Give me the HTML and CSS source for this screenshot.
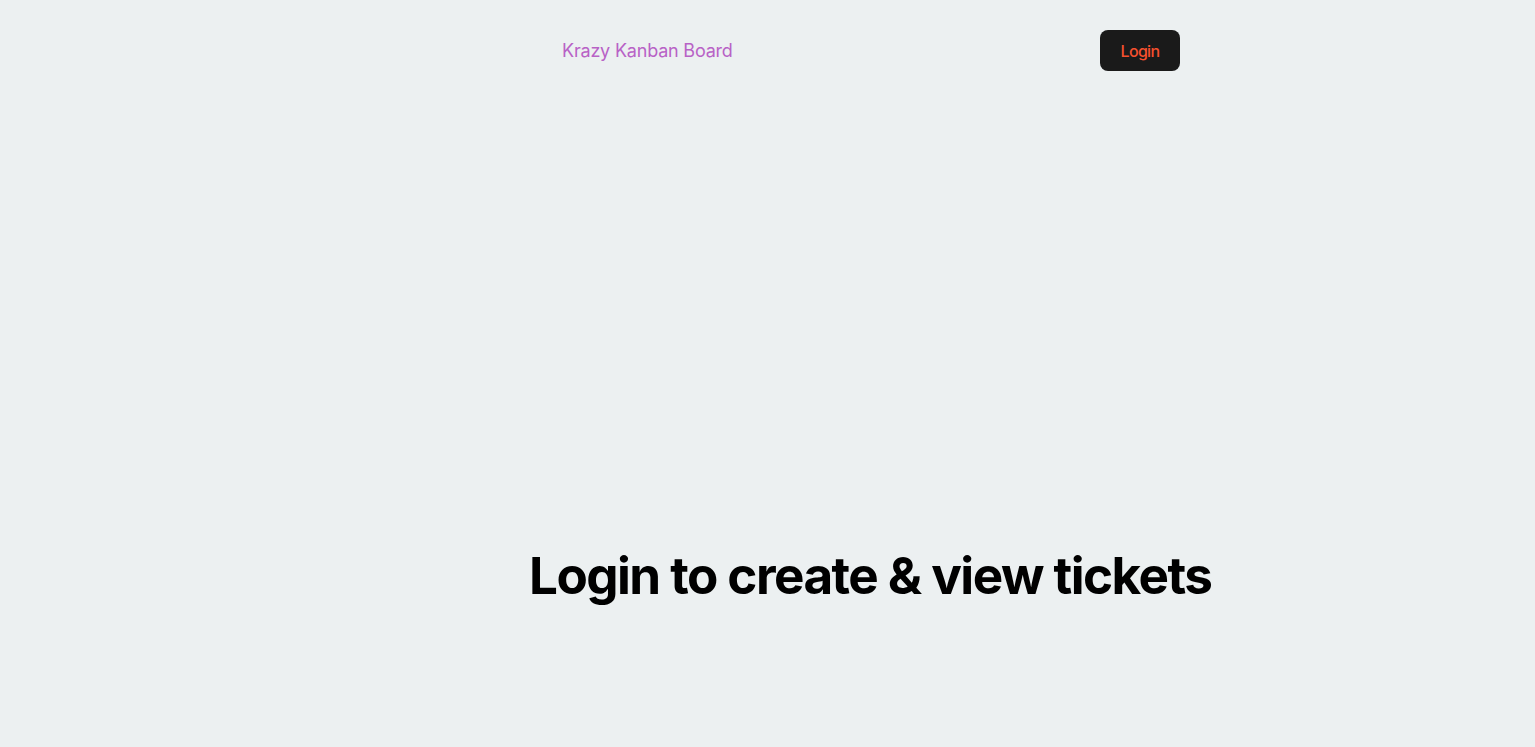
FILE: index.html
```html
<!DOCTYPE html>
<html lang="en">
<head>
<meta charset="utf-8">
<title>Krazy Kanban Board</title>
<link rel="stylesheet" href="styles.css">
</head>
<body>
<div class="root">
  <nav class="nav">
    <a class="brand" href="#">Krazy Kanban Board</a>
    <button class="login-btn" type="button">Login</button>
  </nav>
  <main class="hero">
    <h1 class="hero-title">Login to create &amp; view tickets</h1>
  </main>
</div>
</body>
</html>
```

FILE: styles.css
```css
html, body {
  margin: 0;
  padding: 0;
}
body {
  background: #ecf0f1;
  font-family: Inter, "Noto Sans", sans-serif;
  line-height: 1.5;
  color: #000;
  height: 747px;
  overflow: hidden;
}
.root {
  width: 682px;
  margin-left: 529px;
  display: flex;
  flex-direction: column;
}
.nav {
  display: flex;
  justify-content: space-between;
  align-items: center;
  padding: 30px 31px 0 33px;
}
.brand {
  font-size: 18px;
  letter-spacing: -0.2px;
  color: #b862c6;
  text-decoration: none;
}
.login-btn {
  font-family: Inter, "Noto Sans", sans-serif;
  font-size: 16px;
  font-weight: 500;
  letter-spacing: -0.7px;
  color: #f5502e;
  background: #1a1a1a;
  border: none;
  border-radius: 8px;
  width: 80px;
  height: 41px;
  padding: 0;
}
.hero {
  padding-top: 476px;
}
.hero-title {
  margin: 0;
  font-size: 51.2px;
  line-height: 1.1;
  font-weight: 700;
  letter-spacing: -1.55px;
  white-space: nowrap;
  text-align: center;
}
```
